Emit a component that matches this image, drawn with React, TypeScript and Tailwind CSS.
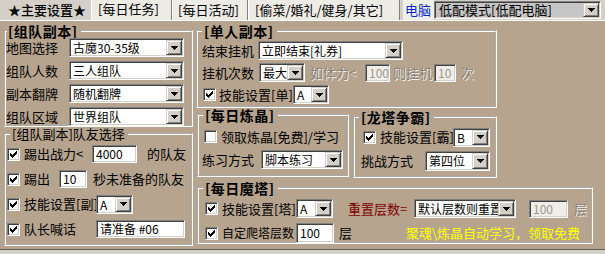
import React from "react";

const sunken =
  "border border-t-[#808080] border-l-[#808080] border-b-white border-r-white shadow-[inset_1px_1px_0_#404040,inset_-1px_-1px_0_#d4d0c8]";
const raised =
  "border border-t-[#d4d0c8] border-l-[#d4d0c8] border-b-[#404040] border-r-[#404040] shadow-[inset_1px_1px_0_#ffffff,inset_-1px_-1px_0_#808080]";
const disabledText = "text-[#8a8378] [text-shadow:1px_1px_0_#f4f0ea]";

const Arrow = () => (
  <svg width="7" height="4" viewBox="0 0 7 4" shapeRendering="crispEdges">
    <path d="M0 0h7v1H0zM1 1h5v1H1zM2 2h3v1H2zM3 3h1v1H3z" fill="#000" />
  </svg>
);

const Combo = ({ value, className = "" }: { value: string; className?: string }) => (
  <div className={`flex h-[19px] shrink-0 bg-white p-[1px] ${sunken} ${className}`}>
    <span className="min-w-0 flex-1 pl-[2px] text-[12px] leading-[15px]">{value}</span>
    <span className={`relative flex w-[16px] shrink-0 items-center justify-center bg-[#d4d0c8] ${raised}`}>
      <Arrow />
    </span>
  </div>
);

const Edit = ({ value, className = "", disabled = false }: { value: string; className?: string; disabled?: boolean }) => (
  <div
    className={`flex h-[18px] shrink-0 items-center pl-[3px] text-[12px] leading-[14px] ${sunken} ${
      disabled ? "bg-[#f1eee9] text-[#9a9690]" : "bg-white"
    } ${className}`}
  >
    {value}
  </div>
);

const Check = ({ on, className = "" }: { on: boolean; className?: string }) => (
  <span className={`flex h-[13px] w-[13px] shrink-0 items-center justify-center bg-white ${sunken} ${className}`}>
    {on && (
      <svg width="7" height="7" viewBox="0 0 7 7" shapeRendering="crispEdges">
        <path d="M0 2h1v3H0zM1 3h1v3H1zM2 4h1v3H2zM3 3h1v3H3zM4 2h1v3H4zM5 1h1v3H5zM6 0h1v3H6z" fill="#000" />
      </svg>
    )}
  </span>
);

const Group = ({
  title,
  className,
  legendClass,
  children,
}: {
  title: string;
  className: string;
  legendClass: string;
  children: React.ReactNode;
}) => (
  <fieldset className={`shrink-0 [border:2px_groove_#ffffff] ${className}`}>
    <legend className={legendClass}>{title}</legend>
    {children}
  </fieldset>
);

const boldLegend = "ml-[4px] pl-[2px] pr-[3px] text-[14px] font-bold leading-[14px] tracking-[0.5px]";

export default function App() {
  return (
    <div className="h-[254px] w-[605px] overflow-hidden whitespace-nowrap bg-[#d4d0c8] font-['Noto_Sans_CJK_SC','Liberation_Sans',sans-serif] text-[13px] text-black">
      {/* tab strip */}
      <div className="flex h-[20px] items-stretch">
        <div className="ml-[2px] flex w-[89px] items-center pl-[6px] bg-[#d4d0c8] font-medium">★主要设置★</div>
        <div className="flex w-[81px] items-center border-l border-white border-r border-r-[#808080] bg-[#ecebe6] pl-[6px] pb-[2px]">
          [每日任务]
        </div>
        <div className="flex w-[76px] items-center border-l border-white border-r border-r-[#808080] bg-[#ecebe6] pl-[5px]">
          [每日活动]
        </div>
        <div className="flex w-[152px] items-center border-l border-white border-r border-r-[#808080] bg-[#ecebe6] pl-[6px]">
          [偷菜/婚礼/健身/其它]
        </div>
        <div className="ml-[3px] flex w-[31px] items-center bg-[#eef0ea] pl-[2px] text-[#0a28c8]">电脑</div>
        <div className={`mt-[1px] flex h-[18px] w-[167px] bg-[#c6c6c6] p-[1px] ${sunken}`}>
          <span className="flex-1 pl-[3px] leading-[14px]">低配模式[低配电脑]</span>
          <span className={`flex w-[16px] items-center justify-center bg-[#d4d0c8] ${raised}`}>
            <Arrow />
          </span>
        </div>
      </div>

      {/* main panel */}
      <div className="flex h-[230px] gap-[3px] border-t border-t-white border-b border-b-[#5a5a5a] bg-[#b6a48e] pl-[4px] pt-[3px]">
        {/* left column */}
        <div className="flex w-[189px] flex-col">
          <Group
            title="[组队副本]"
            className="h-[103px] w-[189px]"
            legendClass="ml-[1px] pl-[1px] pr-[3px] text-[14px] font-bold leading-[14px] tracking-[0.5px]"
          >
            <div className="flex flex-col gap-[4px] leading-[19px]">
              {[
                ["地图选择", "古魔30-35级"],
                ["组队人数", "三人组队"],
                ["副本翻牌", "随机翻牌"],
                ["组队区域", "世界组队"],
              ].map(([label, value]) => (
                <div key={label} className="flex h-[19px] items-center">
                  <span className="w-[63px]">{label}</span>
                  <Combo value={value} className="w-[115px]" />
                </div>
              ))}
            </div>
          </Group>

          <Group title="[组队副本]队友选择" className="h-[119px] w-[189px]" legendClass="ml-[4px] pl-[2px] pr-[3px] leading-[13px]">
            <div className="flex flex-col gap-[5px] pt-[4px] pl-[1px]">
              <div className="flex h-[20px] items-center">
                <Check on />
                <span className="ml-[4px] w-[68px]">踢出战力&lt;</span>
                <Edit value="4000" className="w-[45px]" />
                <span className="ml-[10px]">的队友</span>
              </div>
              <div className="flex h-[20px] items-center">
                <Check on />
                <span className="ml-[4px] w-[35px]">踢出</span>
                <Edit value="10" className="w-[28px]" />
                <span className="ml-[6px]">秒未准备的队友</span>
              </div>
              <div className="flex h-[20px] items-center">
                <Check on />
                <span className="ml-[4px] w-[72px]">技能设置[副]</span>
                <Combo value="A" className="w-[37px]" />
              </div>
              <div className="flex h-[20px] items-center">
                <Check on />
                <span className="ml-[4px] w-[72px]">队长喊话</span>
                <Edit value="请准备 #06" className="w-[89px]" />
              </div>
            </div>
          </Group>
        </div>

        {/* right column */}
        <div className="flex w-[397px] flex-col">
          <Group title="[单人副本]" className="h-[84px] w-[301px]" legendClass={boldLegend}>
            <div className="flex flex-col gap-[3px] pt-[3px] pl-[4px]">
              <div className="flex h-[19px] items-center">
                <span className="w-[56px]">结束挂机</span>
                <Combo value="立即结束[礼券]" className="w-[145px]" />
              </div>
              <div className="flex h-[19px] items-center">
                <span className="w-[57px]">挂机次数</span>
                <Combo value="最大" className="w-[46px]" />
                <span className={`ml-[5px] w-[55px] ${disabledText}`}>如体力&lt;</span>
                <Edit value="100" disabled className="w-[25px]" />
                <span className={`ml-[3px] ${disabledText}`}>则挂机</span>
                <Edit value="10" disabled className="ml-[2px] w-[22px]" />
                <span className={`ml-[5px] ${disabledText}`}>次</span>
              </div>
              <div className="flex h-[19px] items-center">
                <Check on className="ml-[1px]" />
                <span className="ml-[3px] w-[74px]">技能设置[单]</span>
                <Combo value="A" className="w-[36px]" />
              </div>
            </div>
          </Group>

          <div className="ml-[1px] flex h-[73px] items-start gap-[4px]">
            <Group title="[每日炼晶]" className="h-[69px] w-[152px]" legendClass={boldLegend}>
              <div className="flex flex-col gap-[4px] pt-[5px]">
                <div className="flex h-[19px] items-center pl-[5px]">
                  <Check on={false} />
                  <span className="ml-[4px]">领取炼晶[免费]/学习</span>
                </div>
                <div className="flex h-[19px] items-center pl-[3px]">
                  <span className="w-[59px]">练习方式</span>
                  <Combo value="脚本练习" className="w-[82px]" />
                </div>
              </div>
            </Group>

            <Group title="[龙塔争霸]" className="mt-[2px] h-[68px] w-[144px]" legendClass={boldLegend}>
              <div className="flex flex-col gap-[4px] pt-[3px]">
                <div className="flex h-[20px] items-center pl-[8px]">
                  <Check on />
                  <span className="ml-[4px] w-[73px]">技能设置[霸]</span>
                  <Combo value="B" className="w-[37px]" />
                </div>
                <div className="flex h-[20px] items-center pl-[6px]">
                  <span className="w-[64px]">挑战方式</span>
                  <Combo value="第四位" className="h-[20px] w-[65px]" />
                </div>
              </div>
            </Group>
          </div>

          <Group title="[每日魔塔]" className="ml-[1px] h-[63px] w-[396px]" legendClass={boldLegend}>
            <div className="flex flex-col gap-[5px] pt-[4px] pl-[6px]">
              <div className="flex h-[19px] items-center">
                <Check on />
                <span className="ml-[4px] w-[74px]">技能设置[塔]</span>
                <Combo value="A" className="w-[37px]" />
                <span className="ml-[15px] w-[66px] text-[#800000]">重置层数=</span>
                <Combo value="默认层数则重置" className="w-[102px]" />
                <Edit value="100" disabled className="ml-[13px] w-[39px]" />
                <span className={`ml-[6px] ${disabledText}`}>层</span>
              </div>
              <div className="flex h-[20px] items-center">
                <Check on />
                <span className="ml-[4px] w-[74px] text-[12px]">自定爬塔层数</span>
                <Edit value="100" className="h-[20px] w-[38px]" />
                <span className="ml-[5px]">层</span>
                <span className="ml-[54px] text-[#ffff00]">聚魂\炼晶自动学习，领取免费</span>
              </div>
            </div>
          </Group>
        </div>
      </div>
    </div>
  );
}
